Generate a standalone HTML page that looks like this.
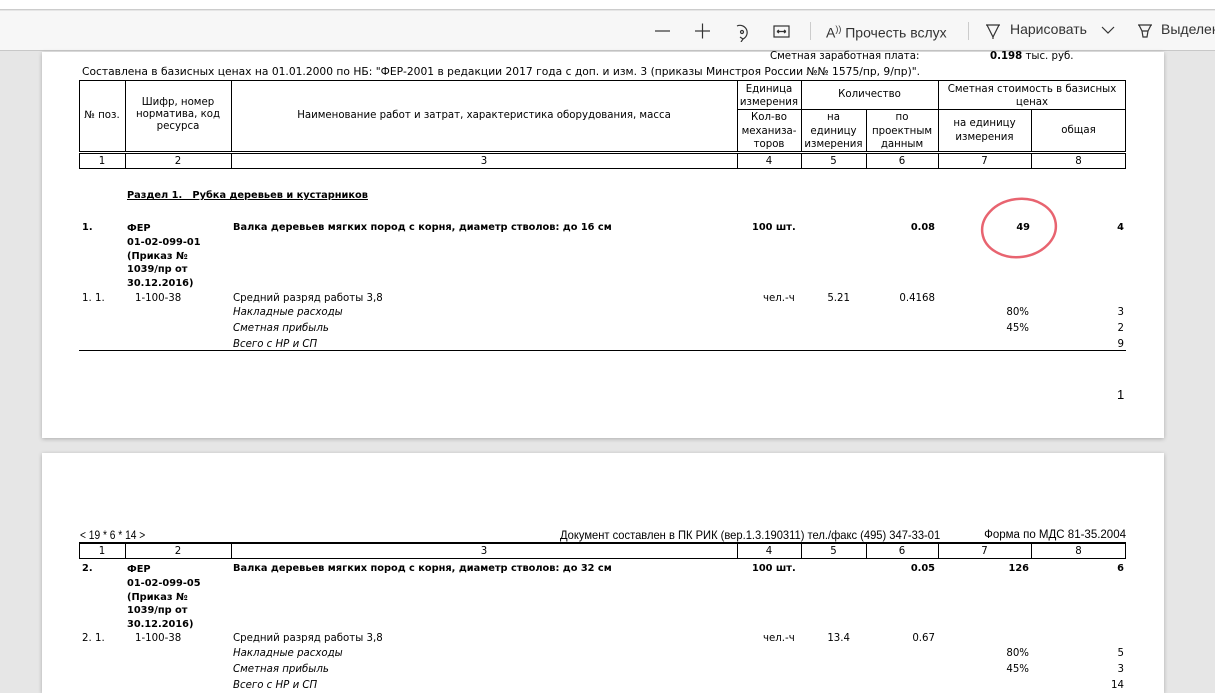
<!DOCTYPE html>
<html><head><meta charset="utf-8">
<style>
*{margin:0;padding:0;box-sizing:border-box}
body{width:1215px;height:684px;overflow:hidden;background:#e6e6e6;position:relative;font-family:"DejaVu Sans","Liberation Sans",sans-serif;font-size:10.2px;color:#000}
.a{position:absolute;white-space:nowrap;line-height:12px;margin-top:2px}
.b{font-weight:bold;font-size:9.8px}
.i{font-style:italic}
.r{text-align:right}
.c{text-align:center}
.page{position:absolute;left:42px;width:1122px;background:#fff;box-shadow:0 1px 4px rgba(0,0,0,.25)}
.tb{position:absolute;font-family:"Liberation Sans",sans-serif;font-size:14px;color:#333;top:20px;line-height:18px;white-space:nowrap}
</style></head><body>
<div style="position:absolute;left:0;top:0;width:1215px;height:10px;background:#fff;border-bottom:1px solid #ccc"></div>
<div style="position:absolute;left:0;top:11px;width:1215px;height:40px;background:#f7f7f7;border-bottom:1px solid #c8c8c8"></div>
<svg style="position:absolute;left:650px;top:20px" width="140" height="22" fill="none" stroke="#333" stroke-width="1.2">
<line x1="5" y1="11" x2="20" y2="11"/>
<line x1="45" y1="11" x2="60" y2="11"/><line x1="52.5" y1="3.5" x2="52.5" y2="18.5"/>
<path d="M87 6 A7 7 0 1 1 93 19"/><circle cx="92" cy="12" r="1.5"/><path d="M90 17l3 2-2 3"/>
<rect x="124" y="6" width="15" height="11"/><path d="M127 11.5h9M127 11.5l2-1.5M127 11.5l2 1.5M136 11.5l-2-1.5M136 11.5l-2 1.5"/>
</svg>
<div style="position:absolute;left:810px;top:22px;width:1px;height:18px;background:#ccc"></div>
<div class="tb" style="left:826px">A<sup style="font-size:9px">))</sup> Прочесть вслух</div>
<div style="position:absolute;left:968px;top:22px;width:1px;height:18px;background:#ccc"></div>
<svg style="position:absolute;left:984px;top:22px" width="20" height="18" fill="none" stroke="#333" stroke-width="1.2"><path d="M2 3h14M3 3l6 12 6-12M9 15v2"/></svg>
<div class="tb" style="left:1010px">Нарисовать</div>
<svg style="position:absolute;left:1100px;top:24px" width="16" height="12" fill="none" stroke="#333" stroke-width="1.2"><path d="M2 3l6 6 6-6"/></svg>
<svg style="position:absolute;left:1136px;top:22px" width="20" height="18" fill="none" stroke="#333" stroke-width="1.2"><path d="M2 3h14M3 3l3 6h6l3-6M6 9l1 6h4l1-6"/></svg>
<div class="tb" style="left:1161px">Выделен</div>

<div class="page" style="top:52px;height:386px"></div>
<div class="page" style="top:453px;height:240px"></div>

<!-- page1 -->
<div class="a" style="left:770px;top:49px">Сметная заработная плата:</div>
<div class="a" style="left:990px;top:49px"><b>0.198</b> тыс. руб.</div>
<div class="a" style="left:82px;top:64px;font-size:10.7px">Составлена в базисных ценах на 01.01.2000 по НБ: "ФЕР-2001 в редакции 2017 года с доп. и изм. 3 (приказы Минстроя России №№ 1575/пр, 9/пр)".</div>

<svg style="position:absolute;left:0;top:0" width="1215" height="684" fill="none" stroke="#000" stroke-width="1">
<rect x="79.5" y="80.5" width="1046" height="71"/>
<line x1="125.5" y1="80" x2="125.5" y2="152"/><line x1="231.5" y1="80" x2="231.5" y2="152"/><line x1="737.5" y1="80" x2="737.5" y2="152"/>
<line x1="801.5" y1="80" x2="801.5" y2="152"/><line x1="938.5" y1="80" x2="938.5" y2="152"/>
<line x1="866.5" y1="109" x2="866.5" y2="152"/><line x1="1031.5" y1="109" x2="1031.5" y2="152"/>
<line x1="737" y1="109.5" x2="1126" y2="109.5"/>
<rect x="79.5" y="153.5" width="1046" height="15"/>
<g><line x1="125.5" y1="153" x2="125.5" y2="169"/><line x1="231.5" y1="153" x2="231.5" y2="169"/><line x1="737.5" y1="153" x2="737.5" y2="169"/><line x1="801.5" y1="153" x2="801.5" y2="169"/><line x1="866.5" y1="153" x2="866.5" y2="169"/><line x1="938.5" y1="153" x2="938.5" y2="169"/><line x1="1031.5" y1="153" x2="1031.5" y2="169"/></g>
<line x1="79" y1="350.5" x2="1126" y2="350.5"/>
<rect x="79.5" y="542.5" width="1046" height="16"/>
<line x1="79" y1="543" x2="1126" y2="543" stroke-width="2"/>
<g><line x1="125.5" y1="543" x2="125.5" y2="559"/><line x1="231.5" y1="543" x2="231.5" y2="559"/><line x1="737.5" y1="543" x2="737.5" y2="559"/><line x1="801.5" y1="543" x2="801.5" y2="559"/><line x1="866.5" y1="543" x2="866.5" y2="559"/><line x1="938.5" y1="543" x2="938.5" y2="559"/><line x1="1031.5" y1="543" x2="1031.5" y2="559"/></g>
<ellipse cx="1019" cy="228" rx="37" ry="29" transform="rotate(-8 1019 228)" stroke="#e03040" stroke-width="2.5" opacity=".75"/>
</svg>

<div class="a c" style="left:79px;width:46px;top:108px">№ поз.</div>
<div class="a c" style="left:125px;width:106px;top:95px;white-space:normal">Шифр, номер норматива, код ресурса</div>
<div class="a c" style="left:231px;width:506px;top:108px">Наименование работ и затрат, характеристика оборудования, масса</div>
<div class="a c" style="left:737px;width:64px;top:81px;line-height:13px">Единица<br>измерения</div>
<div class="a c" style="left:801px;width:137px;top:87px">Количество</div>
<div class="a c" style="left:938px;width:188px;top:81px;line-height:13px">Сметная стоимость в базисных<br>ценах</div>
<div class="a c" style="left:737px;width:64px;top:109px;line-height:13.5px">Кол-во<br>механиза-<br>торов</div>
<div class="a c" style="left:801px;width:65px;top:109px;line-height:13.5px">на<br>единицу<br>измерения</div>
<div class="a c" style="left:866px;width:72px;top:109px;line-height:13.5px">по<br>проектным<br>данным</div>
<div class="a c" style="left:938px;width:93px;top:115px;line-height:13.5px">на единицу<br>измерения</div>
<div class="a c" style="left:1031px;width:95px;top:123px">общая</div>

<div class="a c" style="left:79px;width:46px;top:154px">1</div><div class="a c" style="left:125px;width:106px;top:154px">2</div><div class="a c" style="left:231px;width:506px;top:154px">3</div><div class="a c" style="left:737px;width:64px;top:154px">4</div><div class="a c" style="left:801px;width:65px;top:154px">5</div><div class="a c" style="left:866px;width:72px;top:154px">6</div><div class="a c" style="left:938px;width:93px;top:154px">7</div><div class="a c" style="left:1031px;width:95px;top:154px">8</div>

<div class="a b" style="left:127px;top:188px;text-decoration:underline">Раздел 1.&nbsp;&nbsp; Рубка деревьев и кустарников</div>
<div class="a b" style="left:82px;top:220px">1.</div>
<div class="a b" style="left:127px;top:220px;line-height:13.8px">ФЕР<br>01-02-099-01<br>(Приказ №<br>1039/пр от<br>30.12.2016)</div>
<div class="a b" style="left:233px;top:220px">Валка деревьев мягких пород с корня, диаметр стволов: до 16 см</div>
<div class="a b" style="left:752px;top:220px">100 шт.</div>
<div class="a b r" style="left:880px;width:55px;top:220px">0.08</div>
<div class="a b r" style="left:980px;width:50px;top:220px">49</div>
<div class="a b r" style="left:1074px;width:50px;top:220px">4</div>

<div class="a" style="left:82px;top:291px">1. 1.</div>
<div class="a" style="left:135px;top:291px">1-100-38</div>
<div class="a" style="left:233px;top:291px">Средний разряд работы 3,8</div>
<div class="a" style="left:763px;top:291px">чел.-ч</div>
<div class="a r" style="left:800px;width:50px;top:291px">5.21</div>
<div class="a r" style="left:870px;width:65px;top:291px">0.4168</div>
<div class="a i" style="left:233px;top:305px">Накладные расходы</div>
<div class="a r" style="left:980px;width:49px;top:305px">80%</div>
<div class="a r" style="left:1074px;width:50px;top:305px">3</div>
<div class="a i" style="left:233px;top:321px">Сметная прибыль</div>
<div class="a r" style="left:980px;width:49px;top:321px">45%</div>
<div class="a r" style="left:1074px;width:50px;top:321px">2</div>
<div class="a i" style="left:233px;top:337px">Всего с НР и СП</div>
<div class="a r" style="left:1074px;width:50px;top:337px">9</div>
<div class="a" style="left:1117px;top:386px;font-family:'Liberation Sans',sans-serif;font-size:13px;line-height:14px">1</div>

<!-- page2 -->
<div class="a" style="left:80px;top:527px;font-family:'Liberation Sans',sans-serif;font-size:12px;transform:scaleX(.85);transform-origin:left">&lt; 19 * 6 * 14 &gt;</div>
<div class="a" style="left:560px;top:527px;font-family:'Liberation Sans',sans-serif;font-size:12px;transform:scaleX(.93);transform-origin:left">Документ составлен в ПК РИК (вер.1.3.190311) тел./факс (495) 347-33-01</div>
<div class="a r" style="left:940px;width:186px;top:527px;font-family:'Liberation Sans',sans-serif;font-size:11.5px">Форма по МДС 81-35.2004</div>

<div class="a c" style="left:79px;width:46px;top:544px">1</div><div class="a c" style="left:125px;width:106px;top:544px">2</div><div class="a c" style="left:231px;width:506px;top:544px">3</div><div class="a c" style="left:737px;width:64px;top:544px">4</div><div class="a c" style="left:801px;width:65px;top:544px">5</div><div class="a c" style="left:866px;width:72px;top:544px">6</div><div class="a c" style="left:938px;width:93px;top:544px">7</div><div class="a c" style="left:1031px;width:95px;top:544px">8</div>

<div class="a b" style="left:82px;top:561px">2.</div>
<div class="a b" style="left:127px;top:561px;line-height:13.8px">ФЕР<br>01-02-099-05<br>(Приказ №<br>1039/пр от<br>30.12.2016)</div>
<div class="a b" style="left:233px;top:561px">Валка деревьев мягких пород с корня, диаметр стволов: до 32 см</div>
<div class="a b" style="left:752px;top:561px">100 шт.</div>
<div class="a b r" style="left:880px;width:55px;top:561px">0.05</div>
<div class="a b r" style="left:980px;width:49px;top:561px">126</div>
<div class="a b r" style="left:1074px;width:50px;top:561px">6</div>

<div class="a" style="left:82px;top:631px">2. 1.</div>
<div class="a" style="left:135px;top:631px">1-100-38</div>
<div class="a" style="left:233px;top:631px">Средний разряд работы 3,8</div>
<div class="a" style="left:763px;top:631px">чел.-ч</div>
<div class="a r" style="left:800px;width:50px;top:631px">13.4</div>
<div class="a r" style="left:870px;width:65px;top:631px">0.67</div>
<div class="a i" style="left:233px;top:646px">Накладные расходы</div>
<div class="a r" style="left:980px;width:49px;top:646px">80%</div>
<div class="a r" style="left:1074px;width:50px;top:646px">5</div>
<div class="a i" style="left:233px;top:662px">Сметная прибыль</div>
<div class="a r" style="left:980px;width:49px;top:662px">45%</div>
<div class="a r" style="left:1074px;width:50px;top:662px">3</div>
<div class="a i" style="left:233px;top:678px">Всего с НР и СП</div>
<div class="a r" style="left:1074px;width:50px;top:678px">14</div>
</body></html>
